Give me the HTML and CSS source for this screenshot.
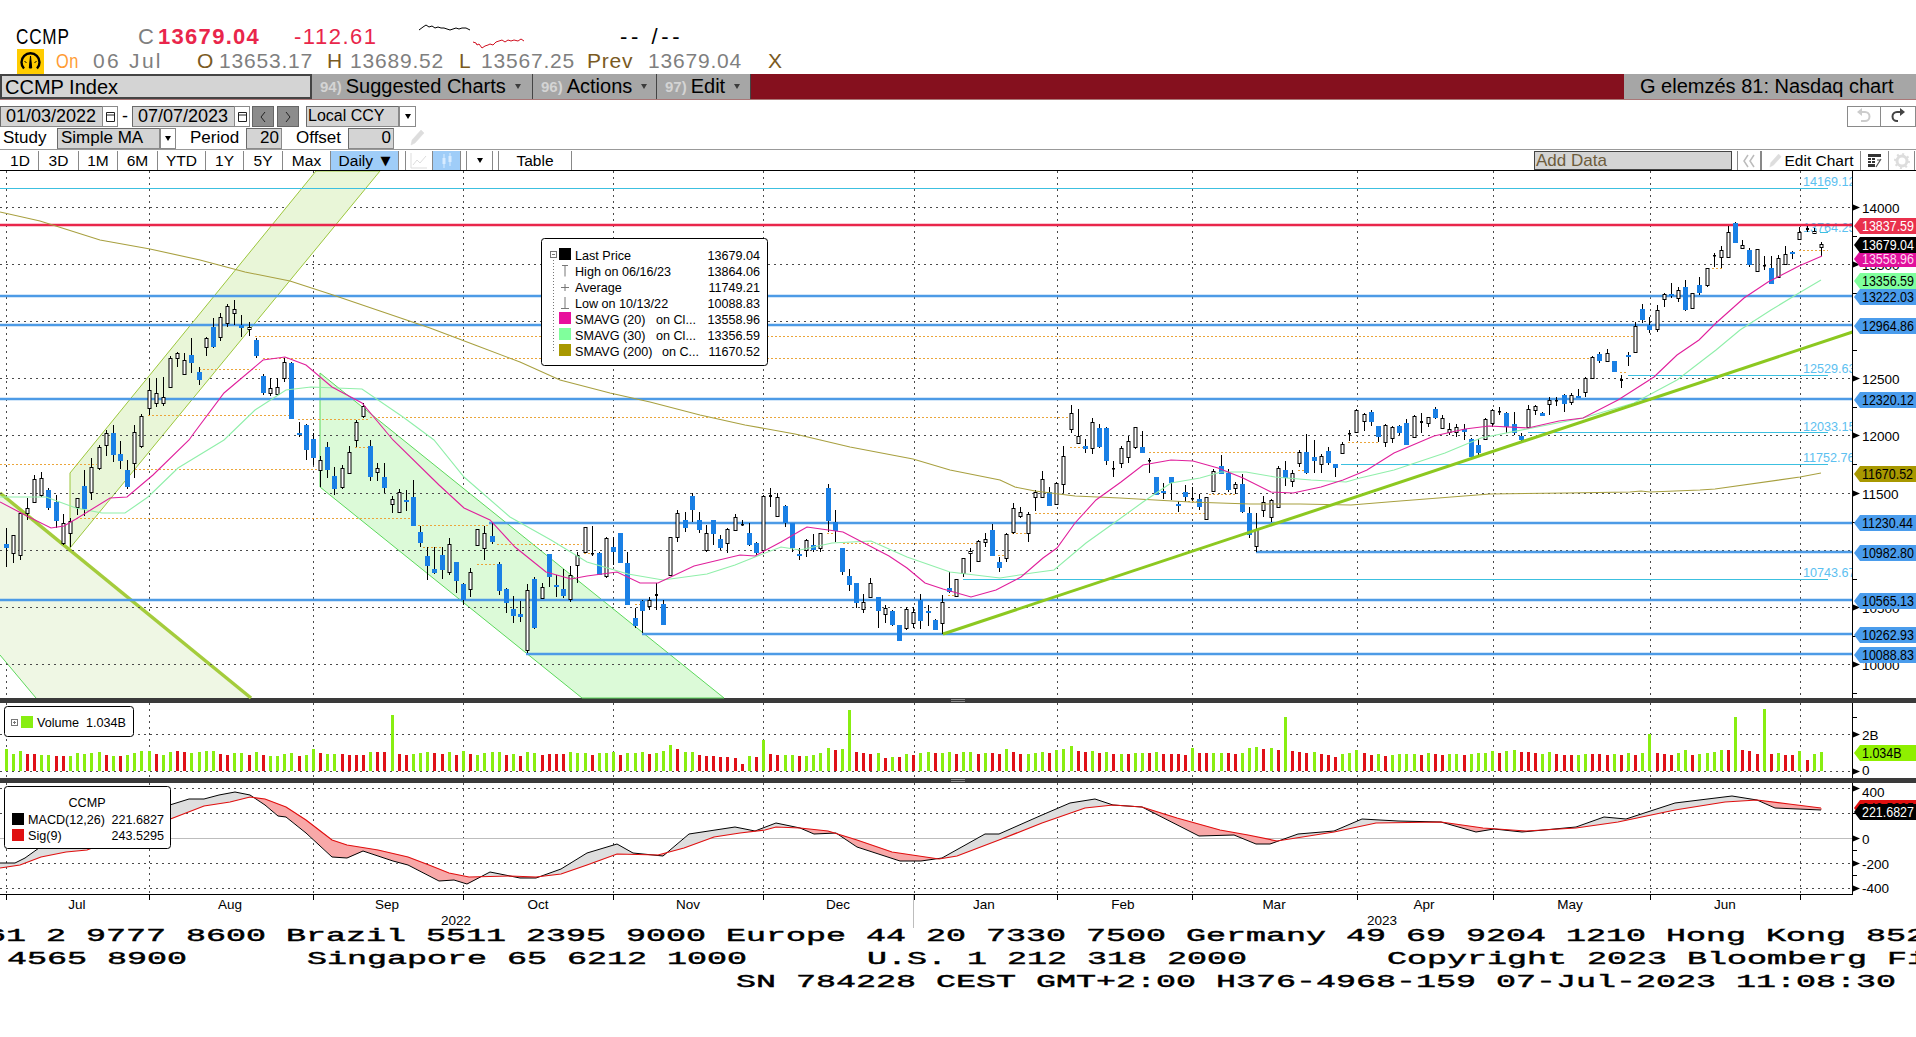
FILE: index.html
```html
<!DOCTYPE html>
<html lang="en">
<head>
    <meta charset="UTF-8">
    <meta name="viewport" content="width=device-width, initial-scale=1.0">
    <title>CCMP Index - G</title>
    <link rel="stylesheet" href="styles.css">
</head>
<body>
    <div class="quote quote-top">
        <span class="sym"><span class="squeeze">CCMP</span></span>
        <span class="gray">C</span>
        <span class="last">13679.04</span>
        <span class="change">-112.61</span>
        <svg class="spark" viewBox="415 20 115 30">
            <polyline class="spark-up" points="419,28 423,25 426,23 429,25 432,24 435,26 438,25 441,26 444,26 447,27 450,28 453,27 456,26 459,27 462,26 466,26 470,28"/>
            <polyline class="spark-down" points="473,40 476,41 477,43 479,42 482,46 485,44 488,43 490,42 493,43 496,40 499,39 502,38 505,40 508,38 511,39 514,38 518,39 521,37 524,39"/>
        </svg>
        <span class="dash">-- /--</span>
    </div>
    <div class="quote quote-low">
        <span class="badge">
            <svg viewBox="0 0 27 25" width="27" height="25">
                <path class="dial" d="M7 19.5a9 9 0 1 1 13 0"/>
                <path class="dial-mark" d="M13.5 7l-1.2 12h2.4zM7.5 12.5l2 1M19.5 12.5l-2 1"/>
            </svg>
        </span>
        <span class="orange"><span class="squeeze">On</span></span>
        <span class="gray wide">06 Jul</span>
        <span class="brown">O</span><span class="gray">13653.17</span>
        <span class="brown">H</span><span class="gray">13689.52</span>
        <span class="brown">L</span><span class="gray">13567.25</span>
        <span class="brown">Prev</span><span class="gray">13679.04</span>
        <span class="brown">X</span>
    </div>

    <div class="title-bar">
        <div class="title-field">CCMP Index</div>
        <div class="title-menu menu-charts"><i>94)</i> Suggested Charts <b class="caret"></b></div>
        <div class="title-menu menu-actions"><i>96)</i> Actions <b class="caret"></b></div>
        <div class="title-menu menu-edit"><i>97)</i> Edit <b class="caret"></b></div>
        <div class="title-fill"></div>
        <div class="title-note">G elemzés 81: Nasdaq chart</div>
    </div>

    <div class="form-row date-row">
        <div class="field date-field">01/03/2022</div>
        <div class="box cal">
            <svg viewBox="0 0 11 13" width="11" height="13"><path class="ico" d="M1.5 2.5h8v9h-8zM1.5 5h8"/></svg>
        </div>
        <div class="date-dash">-</div>
        <div class="field date-field">07/07/2023</div>
        <div class="box cal">
            <svg viewBox="0 0 11 13" width="11" height="13"><path class="ico" d="M1.5 2.5h8v9h-8zM1.5 5h8"/></svg>
        </div>
        <div class="step-btn">
            <svg viewBox="0 0 8 12" width="8" height="12"><path class="ico" d="M6 1L2 6l4 5"/></svg>
        </div>
        <div class="step-btn">
            <svg viewBox="0 0 8 12" width="8" height="12"><path class="ico" d="M2 1l4 5-4 5"/></svg>
        </div>
        <div class="field ccy-field">Local CCY</div>
        <div class="box arrow-box"><b class="caret dark"></b></div>
        <div class="spacer"></div>
        <div class="box undo">
            <svg viewBox="0 0 16 18" width="16" height="18"><path class="curl faded" d="M5 4h4a4.5 4.5 0 0 1 0 9H5"/><path class="head faded" d="M6 0L1 4l5 4z"/></svg>
        </div>
        <div class="box redo">
            <svg viewBox="0 0 16 18" width="16" height="18"><path class="curl" d="M11 4H7a4.500 4.500 0 0 0 0 9h1"/><path class="head" d="M10 0l5 4-5 4z"/></svg>
        </div>
    </div>

    <div class="form-row study-row">
        <div class="label study-label">Study</div>
        <div class="field study-field">Simple MA</div>
        <div class="box arrow-box small"><b class="caret dark"></b></div>
        <div class="label period-label">Period</div>
        <div class="field num-field period-field">20</div>
        <div class="label offset-label">Offset</div>
        <div class="field num-field offset-field">0</div>
        <svg class="pencil" viewBox="0 0 15 20" width="15" height="20"><path class="pencil-mark" d="M11 2l3 3-9 10-4 2 1-5z"/></svg>
    </div>

    <div class="tab-row">
        <div class="tab w37">1D</div>
        <div class="tab w40">3D</div>
        <div class="tab w39">1M</div>
        <div class="tab w40">6M</div>
        <div class="tab w48">YTD</div>
        <div class="tab w38">1Y</div>
        <div class="tab w39">5Y</div>
        <div class="tab w48">Max</div>
        <div class="tab w68 active">Daily&nbsp;<span class="tri">▼</span></div>
        <div class="tab w7"></div>
        <div class="tab w27">
            <svg viewBox="0 0 20 18" width="20" height="18"><path class="line-ico" d="M2 1v15h16M4 13l4-5 3 3 6-7"/></svg>
        </div>
        <div class="tab w28 active">
            <svg viewBox="0 0 16 18" width="16" height="18"><path class="candle-ico" d="M5 2v14M11 1v13"/><path class="candle-fill" d="M3.500 6h3v6h-3zM9.500 4h3v6h-3z"/></svg>
        </div>
        <div class="tab w6"></div>
        <div class="tab w26"><b class="caret dark"></b></div>
        <div class="tab w6"></div>
        <div class="tab w73">Table</div>
        <div class="spacer"></div>
        <div class="add-data">Add Data</div>
        <div class="tab w23 first">
            <svg viewBox="0 0 14 16" width="14" height="16"><path class="ico faded-ico" d="M6 2L2 8l4 6M12 2L8 8l4 6"/></svg>
        </div>
        <div class="tab w100 first">
            <svg viewBox="0 0 15 20" width="13" height="18"><path class="pencil-mark" d="M11 2l3 3-9 10-4 2 1-5z"/></svg>
            <span>Edit Chart</span>
        </div>
        <div class="tab w28">
            <svg viewBox="0 0 16 16" width="16" height="16"><path class="sheet" d="M1 1h13v3H1zM1 5h3v2H1zM5 5h3v2H5zM1 8h3v2H1zM5 8h3v2H5zM1 11h7v3H1z"/><path class="sheet-pen" d="M14 6l-5 8M10 7h4"/></svg>
        </div>
        <div class="tab w26">
            <svg viewBox="0 0 18 18" width="18" height="18"><circle class="gear-rim" cx="9" cy="9" r="5"/><circle class="gear-teeth" cx="9" cy="9" r="7"/></svg>
        </div>
    </div>

    <div class="chart">
        <svg id="price" class="panel price" viewBox="0 170 1916 528"></svg>
        <div class="divider"><span class="grip"></span></div>
        <svg id="volume" class="panel volume" viewBox="0 703 1916 75"></svg>
        <div class="divider"><span class="grip"></span></div>
        <svg id="macd" class="panel macd" viewBox="0 783 1916 112"></svg>
        <svg id="time" class="panel time" viewBox="0 895 1916 29"></svg>
    </div>

    <div class="ticker">
        <div class="ticker-line line-a">61 2 9777 8600 Brazil 5511 2395 9000 Europe 44 20 7330 7500 Germany 49 69 9204 1210 Hong Kong 852 2977 6000</div>
        <div class="ticker-line line-b">4565 8900      Singapore 65 6212 1000      U.S. 1 212 318 2000       Copyright 2023 Bloomberg Finance L.P.</div>
        <div class="ticker-line line-c">SN 784228 CEST GMT+2:00 H376-4968-159 07-Jul-2023 11:08:30</div>
    </div>

    <script src="chart.js"></script>
</body>
</html>
```

FILE: styles.css
```css
* { box-sizing: border-box; }
html, body { margin: 0; height: 1037px; overflow: hidden; background: #fff; }
body { font-family: "Liberation Sans", Arial, sans-serif; color: #000; }

.squeeze { display: inline-block; transform: scaleX(.78); transform-origin: left center; }

/* quote lines */
.quote { display: grid; align-items: center; height: 26px; font-size: 21px; letter-spacing: .8px; }
.quote-top { margin-top: 22px; padding-left: 16px; grid-template-columns: 122px 20px 136px 125px 201px auto; font-size: 22px; letter-spacing: 1px; }
.quote-low { padding-left: 17px; grid-template-columns: 39px 37px 104px 22px 108px 23px 109px 22px 106px 61px 120px auto; }
.gray { color: #7f7f7f; }
.wide { letter-spacing: 2.300px; }
.brown { color: #7a5a22; }
.orange { color: #ff9c33; }
.last { color: #e9264b; font-weight: bold; letter-spacing: 1.300px; }
.change { color: #e9264b; letter-spacing: 1.500px; }
.sym { font-size: 22px; }
.dash { letter-spacing: 3.600px; }
.spark { width: 115px; height: 30px; margin-left: -4px; overflow: visible; }
.spark-up { fill: none; stroke: #000; stroke-width: 1; }
.spark-down { fill: none; stroke: #d01020; stroke-width: 1; }
.badge { display: block; width: 27px; height: 25px; background: #ffcc00; }
.badge svg { display: block; }
.dial { fill: none; stroke: #000; stroke-width: 2.400; }
.dial-mark { fill: #000; stroke: #000; stroke-width: 1; }

/* title bar */
.title-bar { display: flex; height: 26px; font-size: 20px; background: #555; border-bottom: 1px solid #a77; }
.title-field { width: 312px; padding-left: 3px; line-height: 22px; background: #d4d4d4; border: 2px solid #444; }
.title-menu { display: flex; align-items: center; gap: 4px; padding-left: 8px; background: #a6a6a6; border-right: 1px solid #444; }
.title-menu i { font-style: normal; font-size: 15px; font-weight: bold; color: #d4d4d4; }
.menu-charts { width: 221px; }
.menu-actions { width: 124px; }
.menu-edit { width: 94px; }
.caret { display: inline-block; width: 0; height: 0; margin-left: 5px; border: 3px solid transparent; border-top: 5px solid #3c3c3c; border-bottom: 0; }
.caret.dark { margin: 0; border-top-color: #000; }
.title-fill { flex: 1; background: #85101e; }
.title-note { width: 292px; padding-left: 16px; background: #a6a6a6; line-height: 25px; }

/* form lines */
.form-row { display: flex; align-items: stretch; font-size: 18px; }
.date-row { height: 21px; margin-top: 6px; }
.study-row { height: 22px; padding-top: 1px; font-size: 17px; }
.field { background: #d4d4d4; border: 1px solid #8a8a8a; border-top-color: #6a6a6a; border-left-color: #6a6a6a; line-height: 18px; white-space: nowrap; }
.box { display: flex; align-items: center; justify-content: center; background: #fff; border: 1px solid #8a8a8a; }
.date-field { width: 103px; padding-left: 5px; }
.cal { width: 16px; margin-left: -1px; }
.date-dash { width: 14px; text-align: center; line-height: 20px; }
.step-btn { display: flex; align-items: center; justify-content: center; width: 22px; margin-left: 2px; background: #8c8c8c; border: 1px solid #666; }
.step-btn:nth-of-type(7) { margin-left: 3px; }
.ccy-field { width: 93px; margin-left: 7px; padding-left: 1px; font-size: 16px; }
.arrow-box { width: 17px; }
.arrow-box.small { width: 16px; }
.spacer { flex: 1; }
.undo { width: 34px; }
.redo { width: 36px; margin-left: -1px; }
.ico { fill: none; stroke: #222; stroke-width: 1; }
.faded-ico { stroke: #bbb; stroke-width: 1.500; }
.curl { fill: none; stroke: #444; stroke-width: 2; }
.head { fill: #444; }
.curl.faded { stroke: #ccc; }
.head.faded { fill: #ccc; }

.label { line-height: 20px; }
.study-label { width: 57px; padding-left: 3px; }
.study-field { width: 103px; padding-left: 3px; }
.period-label { width: 70px; padding-left: 14px; }
.period-field { width: 36px; }
.offset-label { width: 66px; padding-left: 14px; }
.offset-field { width: 46px; }
.num-field { text-align: right; padding-right: 2px; }
.pencil { margin: 0 0 0 16px; }
.pencil-mark { fill: #ddd; stroke: #ddd; stroke-width: .5; }

/* tab line */
.tab-row { display: flex; align-items: stretch; height: 21px; padding: 1px 1px 0 2px; font-size: 15.500px; border-top: 1px solid #999; }
.tab { display: flex; align-items: center; justify-content: center; gap: 3px; background: #fff; border-right: 1px solid #888; border-left: 0; white-space: nowrap; }
.tab.active { background: #9fcdf8; }
.tab.first { border-left: 1px solid #888; }
.tri { font-family: "DejaVu Sans", sans-serif; font-size: 13px; }
.w6 { width: 6px; } .w7 { width: 7px; } .w23 { width: 24px; } .w26 { width: 26px; } .w27 { width: 27px; } .w28 { width: 28px; }
.w37 { width: 37px; } .w38 { width: 38px; } .w39 { width: 39px; } .w40 { width: 40px; } .w48 { width: 48px; } .w68 { width: 68px; }
.w73 { width: 73px; } .w100 { width: 100px; }
.add-data { width: 198px; margin-right: 5px; padding-left: 1px; font-size: 17px; line-height: 18px; color: #6d5c3c; background: #d4d4d4; border: 1px solid #444; }
.line-ico { fill: none; stroke: #ddd; stroke-width: 1; }
.candle-ico { fill: none; stroke: #d8ecff; stroke-width: 1; }
.candle-fill { fill: #d8ecff; }
.sheet { fill: #333; }
.sheet-pen { fill: none; stroke: #555; stroke-width: 1.200; }
.gear-rim { fill: none; stroke: #ddd; stroke-width: 3; }
.gear-teeth { fill: none; stroke: #ddd; stroke-width: 2; stroke-dasharray: 2 3.500; }

/* chart */
.chart { font-size: 13px; }
.panel { display: block; width: 1916px; overflow: visible; }
.price { height: 528px; }
.volume { height: 75px; }
.macd { height: 112px; }
.time { height: 29px; }
.divider { display: flex; align-items: center; justify-content: center; height: 5px; background: #3a3a3a; }
.grip { width: 14px; height: 3px; border-top: 1px solid #8a8a8a; border-bottom: 1px solid #8a8a8a; }

.frame { stroke: #000; stroke-width: 1; fill: none; }
.grid { stroke: #4a4a4a; stroke-width: 1; stroke-dasharray: 2 4; fill: none; }
.zero { stroke: #bdbdbd; stroke-width: 1; }
.blind { fill: #fff; }
.level { stroke: #4d9be6; stroke-width: 2.500; fill: none; }
.level-red { stroke: #e9264b; stroke-width: 2.500; fill: none; }
.fib { stroke: #3cc0e0; stroke-width: 1; fill: none; }
.fib-label { fill: #5cc0f0; font-size: 12.600px; }
.hint { stroke: #eba53a; stroke-width: 1; stroke-dasharray: 2 2; fill: none; }
.band-olive { fill: #e9f6d8; stroke: #9cc63c; stroke-width: 1; }
.band-pale { fill: #eff7e4; }
.band-green { fill: #dcfad8; stroke: #5cd85c; stroke-width: 1; }
.edge-olive { stroke: #a4cc3c; stroke-width: 3.500; fill: none; }
.edge-green { stroke: #5cd85c; stroke-width: 1; fill: none; }
.trend { stroke: #8cc820; stroke-width: 3; fill: none; }
.wick { stroke: #000; stroke-width: 1; fill: none; }
.body-blue { fill: #1a80e5; }
.body-white { fill: #fff; stroke: #000; stroke-width: 1; }
.body-black { fill: #000; }
.sma20 { stroke: #e0209c; stroke-width: 1.100; fill: none; }
.sma30 { stroke: #90efaa; stroke-width: 1.100; fill: none; }
.sma200 { stroke: #a8a040; stroke-width: 1.100; fill: none; }
.bar-up { fill: #88ee11; }
.bar-down { fill: #e01018; }
.fill-up { stroke: #dedede; stroke-width: 1; }
.fill-down { stroke: #f8a8a8; stroke-width: 1; }
.line-macd { stroke: #000; stroke-width: 1; fill: none; }
.line-sig { stroke: #e01010; stroke-width: 1.200; fill: none; }
.axis-text { font-size: 13.500px; fill: #000; }
.tag-text { font-size: 14px; }
.legend-box { fill: #fff; stroke: #000; stroke-width: 1; }
.legend-text { font-size: 12.600px; fill: #000; }
.legend-mini { stroke: #777; stroke-width: 1; fill: none; }
.legend-tree { stroke: #777; stroke-width: 1; stroke-dasharray: 1 2; fill: none; }
.end { text-anchor: end; }
.mid { text-anchor: middle; }

/* bottom lines */
.ticker { overflow: hidden; margin-top: 1px; font-family: "Liberation Mono", "Courier New", monospace; font-size: 19px; line-height: 23.200px; -webkit-text-stroke: .45px #000; }
.ticker-line { transform: scaleX(1.754); transform-origin: left center; white-space: pre; }
.line-a { margin-left: -14px; }
.line-b { margin-left: 7px; }
.line-c { margin-left: 736px; }
```

FILE: chart.js
```js
var NS = 'http://www.w3.org/2000/svg';

function add(svg, name, cls, attrs, text) {
    var node = document.createElementNS(NS, name);
    if (cls) node.setAttribute('class', cls);
    for (var key in attrs) node.setAttribute(key, attrs[key]);
    if (text !== undefined) node.textContent = text;
    svg.appendChild(node);
    return node;
}

function line(svg, cls, x1, y1, x2, y2) {
    return add(svg, 'line', cls, { x1: x1, y1: y1, x2: x2, y2: y2 });
}

function poly(svg, cls, pts, closed) {
    return add(svg, closed ? 'polygon' : 'polyline', cls, {
        points: pts.map(function (p) { return p.join(','); }).join(' ')
    });
}

function label(svg, cls, x, y, text, attrs) {
    var a = attrs || {};
    a.x = x;
    a.y = y;
    return add(svg, 'text', cls, a, text);
}

var AXIS_X = 1852.5;
var STEP = 7.147;
function cx(i) { return 5.6 + STEP * i; }

var MONTH_X = [6, 148.5, 313, 463, 613, 763, 913.5, 1056.5, 1192, 1356.5, 1492.5, 1649.5, 1799.5];

function verticalGrid(svg, top, bottom) {
    MONTH_X.forEach(function (x) {
        line(svg, 'grid', Math.round(x) + .5, top, Math.round(x) + .5, bottom);
    });
}

function horizontalGrid(svg, ys) {
    ys.forEach(function (y) { line(svg, 'grid', 0, y + .5, AXIS_X, y + .5); });
}

function tag(svg, y, text, fill, ink) {
    var top = y - 8;
    var bot = y + 8;
    add(svg, 'path', '', {
        d: 'M1854 ' + y + 'L1860 ' + top + 'H1916V' + bot + 'H1860Z',
        fill: fill
    });
    add(svg, 'text', 'tag-text', {
        transform: 'translate(1862 ' + (y + 5) + ') scale(.89 1)', fill: ink
    }, text);
}

function axisMark(svg, y) {
    add(svg, 'path', '', { d: 'M1853 ' + (y - 3) + 'L1860 ' + y + 'L1853 ' + (y + 3) + 'Z', fill: '#000' });
}

function miniTick(svg, y) {
    line(svg, 'frame', 1852, y + .5, 1857, y + .5);
}

/* ------- price panel ------- */

// high, body top, body bottom, low, kind (0 white, 1 blue, 2 black), in page pixels
var CANDLES = [
    [528,544,548,567,1],[535,535,553,563,0],[513,513,555,560,0],[498,508,513,520,0],[475,479,502,503,0],
    [472,478,495,497,0],[488,490,508,510,1],[495,502,521,528,1],[514,523,543,545,0],[518,521,533,547,0],
    [498,498,507,515,0],[470,486,509,516,1],[458,467,492,500,0],[445,447,468,470,0],[430,433,445,456,0],
    [425,433,455,462,1],[441,454,461,469,1],[460,470,487,489,1],[425,432,463,478,0],[414,416,446,448,0],
    [378,390,408,415,0],[378,393,403,407,0],[377,397,403,406,0],[356,358,387,388,0],[352,353,358,367,0],
    [353,360,374,375,0],[338,355,363,373,1],[367,372,380,385,1],[337,338,347,356,0],[318,327,347,348,1],
    [313,317,337,341,0],[304,306,323,327,0],[300,309,313,325,0],[315,325,328,337,1],[322,327,329,336,0],
    [338,340,356,358,1],[374,376,393,395,1],[378,388,393,396,0],[378,387,394,395,0],[358,362,378,382,0],
    [362,363,419,419,1],[422,433,435,437,1],[424,425,450,460,1],[433,439,458,465,1],[456,460,470,487,0],
    [442,447,470,478,1],[467,476,489,495,1],[465,468,487,489,0],[446,452,473,474,0],[420,422,440,447,0],
    [403,406,416,418,0],[440,446,477,481,1],[463,468,472,481,0],[463,477,488,493,1],[496,499,504,513,0],
    [489,492,512,513,0],[490,500,502,511,1],[480,497,526,526,1],[526,532,543,547,1],[547,556,566,580,1],
    [547,569,573,574,1],[547,555,570,579,1],[538,544,572,575,0],[562,562,581,593,1],[583,584,600,605,1],
    [568,572,589,597,0],[529,529,545,545,0],[526,533,548,560,0],[523,536,542,544,1],[562,564,591,595,1],
    [588,589,603,613,1],[596,609,616,623,1],[601,614,617,622,1],[584,590,650,653,0],[577,579,628,629,1],
    [583,587,598,599,0],[554,554,577,587,1],[575,585,587,597,1],[569,589,596,598,1],[566,575,599,602,0],
    [552,555,565,583,0],[527,527,552,552,0],[526,553,554,556,2],[552,553,575,575,1],[537,538,576,578,0],
    [537,547,552,565,1],[533,533,563,563,1],[552,563,605,605,1],[608,618,626,628,1],[600,601,611,633,1],
    [597,600,606,610,0],[583,594,596,610,2],[600,604,625,625,1],[537,537,575,575,0],[510,513,537,542,0],
    [512,520,528,532,1],[493,496,510,522,1],[512,520,530,533,1],[525,533,550,552,0],[520,520,534,545,1],
    [535,539,548,550,1],[528,529,543,553,0],[514,517,530,531,0],[520,524,525,526,2],[523,533,545,546,1],
    [542,543,553,555,1],[495,496,550,553,0],[488,495,497,507,2],[493,497,516,517,0],[505,506,523,527,1],
    [523,523,548,552,1],[548,554,556,560,1],
    [539,540,550,557,0],[534,545,550,552,1],[533,533,548,552,0],[484,488,521,532,1],[510,522,531,542,1],
    [548,548,572,575,1],[569,576,585,591,1],[583,583,603,608,1],[594,602,609,613,0],[578,583,597,598,0],
    [597,597,611,628,1],[605,608,614,623,0],[610,611,625,626,1],[625,625,641,641,1],[607,609,628,630,0],
    [607,612,623,628,0],[594,600,621,629,1],[605,611,613,626,1],[619,620,630,630,1],[595,602,623,634,0],
    [572,588,592,593,1],[579,579,596,597,0],[558,558,573,577,0],[548,551,553,572,0],[540,541,561,562,0],
    [533,539,542,547,0],[524,530,556,556,1],[557,562,568,572,1],[533,534,558,562,0],[503,508,532,534,0],
    [507,512,516,518,0],[512,514,533,542,0],[490,492,497,511,0],[471,479,497,497,0],[487,492,506,506,1],
    [482,483,504,505,0],[446,456,484,493,0],[405,413,429,433,0],[409,436,443,443,0],[439,446,449,453,1],
    [418,422,448,454,0],[424,428,447,448,1],[427,428,461,465,1],[461,468,469,477,2],[446,448,463,468,0],
    [436,441,457,463,0],[427,427,447,449,0],[431,447,453,453,1],[458,460,461,473,2],[477,477,495,495,1],
    [483,491,493,499,1],[477,477,483,500,1],[501,504,506,512,1],[485,492,497,501,1],[487,498,499,501,2],
    [494,499,507,510,1],[497,497,519,520,0],[469,471,491,492,0],[455,466,474,474,1],[469,473,490,492,1],
    [482,484,488,494,0],[474,484,512,513,1],[507,513,535,538,1],[513,530,546,552,0],[496,502,510,517,0],
    [499,500,517,522,0],[466,468,507,507,0],[461,470,478,486,1],[470,473,481,487,0],[450,452,463,467,0],
    [434,452,473,474,1],[440,457,461,473,1],[454,456,464,473,0],[447,451,463,465,1],[464,464,468,477,1],
    [442,444,453,453,0],[430,433,434,441,2],[409,410,432,433,0],
    [413,414,421,431,0],[410,412,422,426,1],[426,426,437,442,1],[424,425,442,447,0],[426,427,438,443,0],
    [425,426,433,435,1],[419,423,445,445,1],[415,416,437,438,0],[413,421,423,433,2],[417,417,423,427,0],
    [407,409,418,419,1],[415,418,428,429,0],[423,429,432,435,0],[424,427,432,437,0],[424,429,432,440,1],
    [438,439,457,458,1],[439,445,453,455,1],[418,419,439,440,0],[409,410,423,427,0],[407,411,412,415,2],
    [412,413,427,433,1],[412,424,433,435,1],[433,436,440,443,1],[405,409,427,428,0],[405,406,410,415,0],
    [412,413,416,416,1],[397,400,404,415,0],[397,400,401,406,2],[394,395,404,412,1],[393,395,402,405,0],
    [389,396,398,398,1],[377,378,392,397,0],[356,357,378,379,0],[352,354,361,363,1],[349,353,361,362,0],
    [361,361,372,372,1],[375,379,381,388,2],[352,355,357,366,1],[322,326,352,353,0],[304,309,320,323,1],
    [317,325,330,333,1],[305,310,329,332,0],[293,294,299,307,0],[283,294,296,298,1],[287,290,298,302,0],
    [280,287,310,311,1],[293,293,308,309,0],[277,285,293,295,1],[268,268,285,287,0],[253,255,256,267,2],
    [246,250,257,268,0],[226,232,257,257,0],[222,223,243,243,1],[240,245,248,249,0],[248,250,265,267,1],
    [249,249,271,271,0],[256,265,266,270,2],[256,268,284,284,1],[255,258,277,278,0],[246,254,264,265,0],
    [251,252,254,259,1],[227,232,239,240,0],[226,228,230,232,2],[228,231,233,234,0],[242,244,247,256,0]
];

var SMA20 = [[0,502],[25,515],[51,528],[64,526],[76,519],[110,498],[127,497],[153,475],[189,440],[194,433],[224,393],[263,360],[285,357],[306,365],[332,387],[362,403],[393,440],[439,485],[464,508],[490,520],[515,547],[546,572],[571,579],[587,576],[617,572],[640,583],[658,583],[694,566],[719,560],[740,555],[755,556],[781,542],[800,531],[807,527],[821,529],[843,532],[864,543],[889,556],[907,568],[925,583],[943,589],[971,597],[996,590],[1021,577],[1043,558],[1057,548],[1075,523],[1096,500],[1121,482],[1143,465],[1171,460],[1193,461],[1218,468],[1243,478],[1271,492],[1293,493],[1321,487],[1343,480],[1360,473],[1367,470],[1394,453],[1434,436],[1465,429],[1489,426],[1528,428],[1559,421],[1583,418],[1618,400],[1654,377],[1677,355],[1699,340],[1716,323],[1744,298],[1768,282],[1799,266],[1822,256]];

var SMA30 = [[0,497],[25,497],[46,497],[76,508],[102,513],[125,513],[148,497],[178,468],[224,440],[255,410],[286,390],[311,387],[362,389],[403,417],[434,440],[464,477],[510,517],[551,540],[587,562],[628,574],[663,580],[707,574],[735,565],[760,555],[781,547],[800,550],[832,543],[871,541],[907,557],[950,572],[1000,578],[1032,573],[1054,570],[1086,543],[1114,523],[1143,502],[1171,483],[1200,478],[1221,472],[1246,472],[1275,477],[1311,480],[1346,482],[1360,478],[1394,470],[1445,453],[1481,438],[1532,428],[1583,418],[1634,403],[1677,380],[1716,350],[1740,330],[1771,310],[1799,293],[1821,280]];

var SMA200 = [[0,212],[40,221],[100,240],[150,249],[200,260],[245,272],[290,281],[330,294],[380,311],[430,328],[475,345],[520,362],[560,380],[610,393],[650,402],[700,415],[745,425],[795,434],[850,447],[913,459],[950,470],[1000,480],[1015,487],[1035,491],[1075,496],[1120,498],[1190,502],[1250,504],[1300,504],[1351,505],[1400,501],[1490,494],[1566,493],[1630,492],[1641,491],[1650,492],[1700,490],[1715,489],[1800,477],[1821,473]];

// y, x from
var LEVELS = [[296,0],[325,0],[399,0],[523,489],[552,1256],[600,0],[634,642],[654,526]];
var FIBS = [[188.5,0,'14169.12',181],[232.5,1820,'13764.25',227],[375.5,1628,'12529.63',368],[432.5,1528,'12033.15',426],[464.5,1341,'11752.76',457],[579.5,963,'10743.67',572]];
var HINTS = [[336,255,1634],[358,263,1591],[369,199,260],[415,148,291],[417,370,1068],[419,298,370],[447,355,370],[464,0,97],[469,135,321],[518,76,411],[525,418,490],[544,497,582],[547,423,441],[564,477,497],[553,584,592],[604,635,645],[600,671,853],[543,843,977],[447,1070,1086],[452,1149,1298],[513,1035,1205],[494,1209,1237],[533,1012,1027],[555,998,1005],[595,948,956],[533,827,834],[501,1184,1198],[470,1298,1305],[442,1348,1378],[372,1620,1628],[268,1712,1722],[250,1799,1828]];

function drawPrice(svg) {
    var gridY = [207, 264, 321, 378, 435, 493, 550, 607, 664];
    verticalGrid(svg, 171, 698);
    horizontalGrid(svg, gridY);

    // channels
    poly(svg, 'band-olive', [[70,473],[316,171],[380,171],[70,548]], true);
    poly(svg, 'band-pale', [[0,493],[251,698],[36,698],[0,655]], true);
    line(svg, 'edge-olive', 0, 493, 251, 698);
    line(svg, 'edge-green', 0, 655, 36, 698);
    poly(svg, 'band-green', [[320,373],[724,698],[582,698],[320,487]], true);
    horizontalGrid(svg, gridY.slice(4));

    HINTS.forEach(function (h) { line(svg, 'hint', h[1], h[0] + .5, h[2], h[0] + .5); });
    FIBS.forEach(function (f) {
        line(svg, 'fib', f[1], f[0], 1828, f[0]);
        label(svg, 'fib-label', 1803, f[3] + 4.5, f[2]);
    });
    LEVELS.forEach(function (l) { line(svg, 'level', l[1], l[0], AXIS_X, l[0]); });
    line(svg, 'level-red', 0, 225, AXIS_X, 225);

    CANDLES.forEach(function (c, i) {
        var x = Math.round(cx(i)) + .5;
        line(svg, 'wick', x, c[0], x, c[3]);
        var h = Math.max(c[2] - c[1], 1.5);
        if (c[4] === 0) add(svg, 'rect', 'body-white', { x: x - 1.5, y: c[1] + .5, width: 3, height: h });
        if (c[4] === 1) add(svg, 'rect', 'body-blue', { x: x - 2.5, y: c[1], width: 5, height: h });
        if (c[4] === 2) add(svg, 'rect', 'body-black', { x: x - 1.5, y: c[1], width: 3, height: h });
    });

    poly(svg, 'sma200', SMA200);
    poly(svg, 'sma30', SMA30);
    poly(svg, 'sma20', SMA20);
    line(svg, 'trend', 943, 634, AXIS_X, 332);

    // axis column
    add(svg, 'rect', 'blind', { x: 1853, y: 171, width: 63, height: 527 });
    line(svg, 'frame', 0, 170.5, 1916, 170.5);
    line(svg, 'frame', AXIS_X, 170, AXIS_X, 698);
    [236, 293, 350, 407, 464, 522, 579, 636, 693].forEach(function (y) { miniTick(svg, y); });
    [[207,'14000'],[264,'13500'],[378,'12500'],[435,'12000'],[493,'11500'],[607,'10500'],[664,'10000']].forEach(function (a) {
        axisMark(svg, a[0] + .5);
        label(svg, 'axis-text', 1862, a[0] + 6, a[1]);
    });

    var BLUE = '#4a9cec';
    tag(svg, 226, '13837.59', '#e9304c', '#fff');
    tag(svg, 281, '13356.59', '#80ff9c', '#000');
    tag(svg, 297, '13222.03', BLUE, '#000');
    tag(svg, 326, '12964.86', BLUE, '#000');
    tag(svg, 400, '12320.12', BLUE, '#000');
    tag(svg, 474, '11670.52', '#a89800', '#000');
    tag(svg, 523, '11230.44', BLUE, '#000');
    tag(svg, 553, '10982.80', BLUE, '#000');
    tag(svg, 601, '10565.13', BLUE, '#000');
    tag(svg, 635, '10262.93', BLUE, '#000');
    tag(svg, 655, '10088.83', BLUE, '#000');
    tag(svg, 259, '13558.96', '#e0109c', '#ffd8f0');
    tag(svg, 245, '13679.04', '#000', '#fff');

    drawPriceLegend(svg);
}

function drawPriceLegend(svg) {
    add(svg, 'rect', 'legend-box', { x: 541.5, y: 238.5, width: 226, height: 127, rx: 3 });
    line(svg, 'legend-tree', 553.5, 260, 553.5, 351);
    add(svg, 'rect', 'legend-mini', { x: 550.5, y: 251.5, width: 6, height: 6 });
    line(svg, 'legend-mini', 552, 254.5, 555, 254.5);
    var rows = [
        ['Last Price', '13679.04', '#000'],
        ['High on 06/16/23', '13864.06'],
        ['Average', '11749.21'],
        ['Low on 10/13/22', '10088.83'],
        ['SMAVG (20)', '13558.96', '#e8109c', 'on Cl...', 656],
        ['SMAVG (30)', '13356.59', '#80ff9c', 'on Cl...', 656],
        ['SMAVG (200)', '11670.52', '#a89800', 'on C...', 662]
    ];
    rows.forEach(function (r, n) {
        var y = 255 + n * 16;
        if (r[2]) add(svg, 'rect', '', { x: 559, y: y - 7, width: 12, height: 12, fill: r[2] });
        label(svg, 'legend-text', 575, y + 4.5, r[0]);
        if (r[3]) label(svg, 'legend-text', r[4], y + 4.5, r[3]);
        label(svg, 'legend-text end', 760, y + 4.5, r[1]);
    });
    // high, average and low markers
    add(svg, 'path', 'legend-mini', { d: 'M562 265.500h6M565 265.500v11M561 287.500h8M565 284v7M561 308.500h8M565 297v11' });
}

/* ------- volume panel ------- */

// bar heights, negative for a red bar
var VOLUME = [
    22,17,20,-17,-17,16,16,-15,-15,15, 18,17,18,19,-16,15,-15,16,18,20,
    20,-17,16,19,-20,-19,18,19,20,20, -17,-16,18,18,-16,19,-16,15,15,17,
    18,-15,16,22,-18,17,17,-17,-16,-16, -16,19,-19,-19,56,-17,-16,17,18,19,
    -18,-17,19,-16,20,-17,16,18,19,19, -16,17,-15,19,18,-16,-17,-17,-17,19,
    18,18,-16,18,18,19,-16,18,18,19, -17,18,20,26,-22,19,19,-16,-15,-15,
    -14,-14,-13,-7,15,-14,31,-17,-16,
    16,16,-15,15,16,18,23,-21,22,61, -19,-18,-17,18,-13,14,-14,17,-16,18,
    19,-18,18,19,-17,19,19,-17,18,-18, -17,22,-19,-17,17,18,19,-18,21,22,
    25,-20,-19,20,-18,19,-17,17,-17,18, 18,-18,19,-17,-17,-17,-16,23,-18,-18,
    18,18,-18,-17,18,23,24,-22,23,-21, 54,-20,-19,-18,
    19,-17,-16,-14,17,18,21,-18,-16,17, -15,16,17,17,17,-16,18,-17,-16,17,
    17,-16,17,18,18,20,-18,20,21,-19, -19,-18,17,19,-17,-16,-16,16,17,-17,
    -17,-16,17,-16,18,-16,18,37,-18,-17, -16,18,21,-16,17,18,19,21,-21,54,
    -21,-20,-17,62,-17,18,-16,-16,20,-11, 17,19
];

function drawVolume(svg) {
    verticalGrid(svg, 703, 778);
    horizontalGrid(svg, [734, 771]);
    VOLUME.forEach(function (v, i) {
        var h = Math.abs(v);
        add(svg, 'rect', v > 0 ? 'bar-up' : 'bar-down', { x: Math.round(cx(i)) - 1, y: 771 - h, width: 3, height: h });
    });
    add(svg, 'rect', 'blind', { x: 1853, y: 703, width: 63, height: 75 });
    line(svg, 'frame', AXIS_X, 703, AXIS_X, 778);
    miniTick(svg, 717);
    axisMark(svg, 734.5);
    axisMark(svg, 771.5);
    label(svg, 'axis-text', 1862, 740, '2B');
    label(svg, 'axis-text', 1862, 775, '0');
    tag(svg, 753, '1.034B', '#8fef00', '#000');

    add(svg, 'rect', 'legend-box', { x: 4.5, y: 706.5, width: 129, height: 30, rx: 3 });
    add(svg, 'rect', 'legend-mini', { x: 11.5, y: 719.5, width: 6, height: 6 });
    line(svg, 'legend-mini', 13, 722.5, 16, 722.5);
    line(svg, 'legend-mini', 14.5, 721, 14.5, 724);
    add(svg, 'rect', '', { x: 21, y: 716, width: 12, height: 12, fill: '#88ee11' });
    label(svg, 'legend-text', 37, 727, 'Volume');
    label(svg, 'legend-text', 86, 727, '1.034B');
}

/* ------- MACD panel ------- */

var MACD = [[0,863],[15,863],[25,858],[46,843],[100,825],[173,804],[189,799],[204,799],[219,795],[235,792],[250,795],[265,805],[278,816],[286,817],[306,833],[332,857],[347,858],[363,851],[393,861],[408,865],[439,881],[454,880],[467,884],[490,872],[520,878],[536,878],[561,869],[587,853],[617,844],[633,853],[663,856],[689,834],[735,827],[755,831],[776,823],[800,828],[814,834],[836,833],[857,847],[900,861],[921,861],[942,858],[985,834],[999,834],[1042,815],[1070,803],[1095,799],[1113,805],[1142,807],[1199,836],[1234,835],[1256,844],[1270,844],[1298,834],[1334,831],[1362,819],[1398,821],[1441,822],[1476,832],[1494,829],[1522,832],[1576,827],[1604,817],[1626,819],[1675,803],[1732,796],[1757,800],[1775,808],[1821,810]];
var SIGNAL = [[0,868],[20,865],[41,857],[66,852],[87,850],[173,818],[204,806],[230,802],[250,797],[265,799],[286,807],[306,820],[332,840],[347,845],[378,850],[408,857],[429,865],[449,873],[469,877],[510,876],[536,877],[561,874],[587,865],[617,854],[658,855],[684,848],[714,837],[740,833],[765,830],[776,827],[800,828],[828,831],[857,840],[892,852],[939,859],[957,856],[999,840],[1042,823],[1085,808],[1113,805],[1142,807],[1177,818],[1220,830],[1248,835],[1277,841],[1334,832],[1376,823],[1441,822],[1483,828],[1526,831],[1576,828],[1618,822],[1675,810],[1725,802],[1757,800],[1789,804],[1821,808]];

function valueAt(pts, x) {
    for (var i = 1; i < pts.length; i++) {
        if (x <= pts[i][0]) {
            var a = pts[i - 1], b = pts[i];
            return a[1] + (b[1] - a[1]) * (x - a[0]) / (b[0] - a[0]);
        }
    }
    return pts[pts.length - 1][1];
}

function drawMacd(svg) {
    verticalGrid(svg, 783, 894);
    horizontalGrid(svg, [788, 813, 863, 888]);
    line(svg, 'zero', 0, 838.5, AXIS_X, 838.5);
    for (var x = 0; x <= 1821; x++) {
        var m = valueAt(MACD, x), s = valueAt(SIGNAL, x);
        line(svg, m < s ? 'fill-up' : 'fill-down', x + .5, m, x + .5, s);
    }
    poly(svg, 'line-macd', MACD);
    poly(svg, 'line-sig', SIGNAL);

    add(svg, 'rect', 'blind', { x: 1853, y: 783, width: 63, height: 112 });
    line(svg, 'frame', 0, 894.5, AXIS_X + .5, 894.5);
    line(svg, 'frame', AXIS_X, 783, AXIS_X, 895);
    [813, 850, 875].forEach(function (y) { miniTick(svg, y); });
    [[788,797,'400'],[838,844,'0'],[863,869,'-200'],[888,893,'-400']].forEach(function (a) {
        axisMark(svg, a[0] + .5);
        label(svg, 'axis-text', 1862, a[1], a[2]);
    });
    tag(svg, 808, '243.5295', '#e01010', '#000');
    tag(svg, 812, '221.6827', '#000', '#fff');

    add(svg, 'rect', 'legend-box', { x: 4.5, y: 786.5, width: 166, height: 62, rx: 3 });
    label(svg, 'legend-text mid', 87, 807, 'CCMP');
    add(svg, 'rect', '', { x: 12, y: 813, width: 12, height: 12, fill: '#000' });
    add(svg, 'rect', '', { x: 12, y: 829, width: 12, height: 12, fill: '#e01010' });
    label(svg, 'legend-text', 28, 824, 'MACD(12,26)');
    label(svg, 'legend-text', 28, 840, 'Sig(9)');
    label(svg, 'legend-text end', 164, 824, '221.6827');
    label(svg, 'legend-text end', 164, 840, '243.5295');
}

/* ------- time axis ------- */

function drawTime(svg) {
    MONTH_X.forEach(function (x) {
        line(svg, 'frame', Math.round(x) + .5, 895, Math.round(x) + .5, 900);
    });
    line(svg, 'zero', 913.5, 895, 913.5, 928);
    [['Jul',77],['Aug',230],['Sep',387],['Oct',538],['Nov',688],['Dec',838],['Jan',984],['Feb',1123],['Mar',1274],['Apr',1424],['May',1570],['Jun',1725]].forEach(function (m) {
        label(svg, 'axis-text mid', m[1], 909, m[0]);
    });
    label(svg, 'axis-text mid', 456, 925, '2022');
    label(svg, 'axis-text mid', 1382, 925, '2023');
}

drawPrice(document.getElementById('price'));
drawVolume(document.getElementById('volume'));
drawMacd(document.getElementById('macd'));
drawTime(document.getElementById('time'));
```
